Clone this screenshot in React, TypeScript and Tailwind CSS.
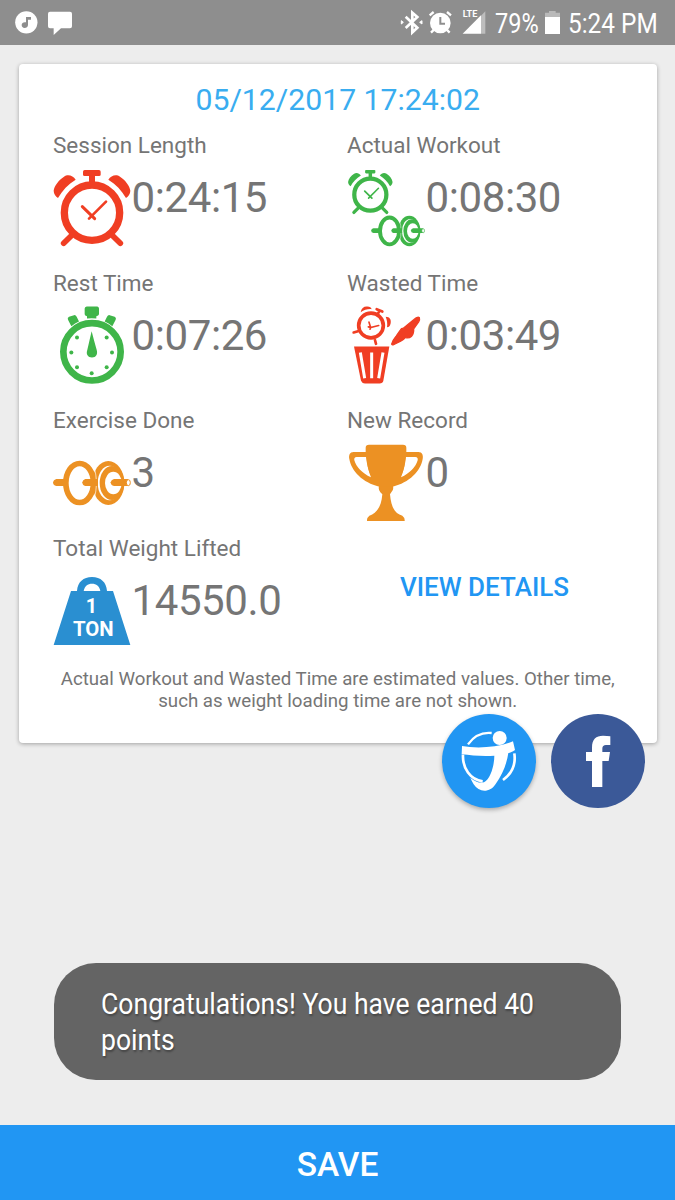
import type { ReactNode } from "react";

const RED = "#f03e23";
const GREEN = "#3fb549";
const ORANGE = "#ec9123";

function Icon({ viewBox, children }: { viewBox: string; children: ReactNode }) {
  return (
    <svg viewBox={viewBox} className="mt-[10.5px] h-[78px] w-[78px] shrink-0 overflow-visible" fill="none">
      {children}
    </svg>
  );
}

function AlarmShape({ color }: { color: string }) {
  return (
    <>
      <g fill={color}>
        <path d="M134 150H177Q182 150 182 155V164Q182 168 177 168H165V190H147V168H134Q129 168 129 164V155Q129 150 134 150Z" />
        <path d="M107 179C99 166 83 162 72 170C55 181 43 198 41 212C41 222 47 229 54 234C67 211 84 193 107 179Z" />
        <path d="M205 179C213 166 229 162 240 170C257 181 269 198 271 212C271 222 265 229 258 234C245 211 228 193 205 179Z" />
      </g>
      <circle cx="156" cy="278" r="83" stroke={color} strokeWidth="22" />
      <g stroke={color} strokeLinecap="round">
        <path d="M97 344L71 370M215 344L241 370" strokeWidth="17" />
        <path d="M198 245L147 296" strokeWidth="8" />
        <path d="M127 260L164 296" strokeWidth="9" />
      </g>
    </>
  );
}

function DumbbellShape({ color }: { color: string }) {
  return (
    <>
      <ellipse cx="119" cy="144" rx="41.5" ry="58.5" stroke={color} strokeWidth="17" />
      <ellipse cx="205" cy="144" rx="48" ry="66" fill={color} />
      <ellipse cx="209" cy="144" rx="36" ry="52" fill="#fff" />
      <ellipse cx="216" cy="144" rx="37" ry="51" fill={color} />
      <ellipse cx="220" cy="144" rx="25" ry="34" fill="#fff" />
      <path d="M163 98C171 126 171 162 163 190" stroke="#fff" strokeWidth="2" />
      <g fill={color}>
        <path d="M49 132H78V153H49Q39 151 39 142Q40 134 49 132Z" />
        <path d="M136 132H174V153H136Q127 151 127 142Q128 134 136 132Z" />
        <path d="M222 132H264V153H222Q212 151 212 142Q213 134 222 132Z" />
      </g>
      <ellipse cx="265" cy="143" rx="6" ry="9" fill="#fff" stroke={color} strokeWidth="3" />
    </>
  );
}

function SessionIcon() {
  return (
    <Icon viewBox="39 147 234 234">
      <AlarmShape color={RED} />
    </Icon>
  );
}

function WorkoutIcon() {
  return (
    <Icon viewBox="21 27 234 234">
      <g transform="translate(0.5 -57.3) scale(0.58)">
        <AlarmShape color={GREEN} />
      </g>
      <g transform="translate(66.5 113.5) scale(0.69)">
        <DumbbellShape color={GREEN} />
      </g>
    </Icon>
  );
}

function RestIcon() {
  return (
    <Icon viewBox="39 34.5 234 234">
      <g fill={GREEN}>
        <path d="M140 36H172Q177 37 177 42V59Q176 64 169 65V72Q155 71 141 72V65Q134 64 134 59V42Q134 37 140 36Z" />
        <path d="M84 76Q81 70 87 67L102 62Q107 61 110 67L117 81Q105 86 94 95Z" />
        <path d="M227 76Q230 70 224 67L209 62Q204 61 201 67L194 81Q206 86 217 95Z" />
        <path d="M155 110Q151 126 142 166C137 180 144 189 156 189C168 189 174 180 170 166Q160 130 155 110Z" />
        <circle cx="111" cy="129" r="6" />
        <circle cx="200" cy="129" r="6" />
        <circle cx="94" cy="174" r="6" />
        <circle cx="216" cy="174" r="6" />
        <circle cx="111" cy="218" r="6" />
        <circle cx="200" cy="218" r="6" />
        <circle cx="155" cy="236" r="6" />
      </g>
      <circle cx="156" cy="172" r="86" stroke={GREEN} strokeWidth="20" />
    </Icon>
  );
}

function WastedIcon() {
  return (
    <Icon viewBox="21 34.5 234 234">
      <circle cx="93" cy="93" r="37" stroke={RED} strokeWidth="11" />
      <g fill={RED}>
        <path d="M62 53C64 41 72 35 82 36C90 37 93 39 95 44C83 43 73 46 62 53Z" />
        <path d="M137 67C149 67 154 76 152 86C150 95 146 98 141 98C143 87 141 77 137 67Z" />
        <path d="M42 156H148L130 259Q128 267 119 267H75Q66 267 63 259Z" />
        <path
          d="M155 149C157 139 163 131 169 124L181 107Q184 101 190 101L221 76Q231 66 238 69Q240 75 236 82L221 103Q222 117 215 125Q206 133 196 129Q190 136 182 140L162 150Q156 153 155 149Z"
          stroke={RED}
          strokeWidth="4"
          strokeLinejoin="round"
        />
      </g>
      <g stroke={RED} strokeLinecap="round">
        <path d="M110 44L127 51M118 49L112 61" strokeWidth="8" />
        <path d="M41 114L54 110M105 137L108 148" strokeWidth="8" />
        <path d="M87 83L92 99L116 93M92 99L90 104M92 99L85 97" strokeWidth="5" />
      </g>
      <path d="M61 174L74 251M95 174V251M129 174L116 251" stroke="#fff" strokeWidth="9" />
    </Icon>
  );
}

function ExerciseIcon() {
  return (
    <Icon viewBox="39 27 234 234">
      <DumbbellShape color={ORANGE} />
    </Icon>
  );
}

function TrophyIcon() {
  return (
    <Icon viewBox="21 27 234 234">
      <path
        fill={ORANGE}
        d="M87 29H189Q199 29 199 38V50C196 95 190 125 158 151Q163 163 154 172L150 178C153 215 164 236 187 242Q195 248 194 258H81Q80 248 88 242C111 234 124 215 127 178L121 172Q113 162 118 151C87 125 80 95 77 50V38Q77 29 87 29Z"
      />
      <path
        fill={ORANGE}
        fillRule="evenodd"
        d="M80 51H41C29 51 26 61 28 72C34 108 68 143 118 155L158 155C208 143 242 108 248 72C250 61 247 51 235 51H196ZM79 66H50Q41 67 43 76C49 96 66 115 93 127C86 110 82 91 79 66ZM197 66H226Q235 67 233 76C227 96 210 115 183 127C190 110 194 91 197 66Z"
      />
    </Icon>
  );
}

function WeightIcon() {
  return (
    <Icon viewBox="39 21 234 234">
      <path fill="#2a8fd1" d="M41 240L93 78H111C113 51 130 36 156 36C182 36 199 51 201 78H219L271 240Z" />
      <path fill="#fff" d="M131 78C134 63 143 56 156 56C169 56 178 63 181 78Z" />
      <g fill="#fff" fontFamily="Roboto, sans-serif" fontWeight="700" textAnchor="middle">
        <text x="154" y="144" fontSize="59">1</text>
        <text x="160" y="214" fontSize="59" textLength="122" lengthAdjust="spacingAndGlyphs">TON</text>
      </g>
    </Icon>
  );
}

function Stat({ label, value, icon }: { label: string; value: string; icon: ReactNode }) {
  return (
    <div className="w-[294px]">
      <div className="text-[22.5px] leading-[26px] whitespace-nowrap">{label}</div>
      <div className="flex items-start">
        {icon}
        <div className="mt-[15px] ml-[0.5px] text-[42px] leading-[50px] tracking-[-0.4px] whitespace-nowrap">{value}</div>
      </div>
    </div>
  );
}

function StatusBar() {
  return (
    <header className="flex h-[45px] items-center bg-[#8e8e8e] text-[28px] leading-none text-white">
      <svg viewBox="0 0 240 135" className="h-[45px] w-20">
        <circle cx="79" cy="67" r="33.5" fill="#fff" />
        <path d="M80 51H93V59H84V75C84 81 79 84 74 84C68 84 65 80 65 75C65 69 71 65 78 67V51Z" fill="#8e8e8e" />
        <path d="M150 35H210Q216 35 216 41V79Q216 85 210 85H183L161 105V85H150Q144 85 144 79V41Q144 35 150 35Z" fill="#fff" />
      </svg>
      <svg viewBox="0 0 290 135" className="ml-auto h-[45px] w-[96.67px]" fill="none">
        <path d="M44 50L79 83L64 97V38L79 51L44 84" stroke="#fff" strokeWidth="8" />
        <path d="M31 62L37 67L31 72ZM93 62L86 67L93 72Z" fill="#fff" stroke="#fff" strokeWidth="3" />
        <circle cx="148" cy="69" r="31" fill="#fff" />
        <path d="M116 46L128 36M180 46L168 36M129 89L120 98M167 89L176 98" stroke="#fff" strokeWidth="7" />
        <path d="M148 51V71H162" stroke="#8e8e8e" strokeWidth="6" />
        <path d="M270 47L283 34V101H270Z" fill="#bdbdbd" />
        <path d="M215 101L270 46V101Z" fill="#fff" />
        <text x="215" y="52" fill="#fff" fontFamily="Roboto, sans-serif" fontWeight="700" fontSize="26" textLength="44" lengthAdjust="spacingAndGlyphs">LTE</text>
      </svg>
      <span className="ml-[7px] block w-[50px] origin-left scale-x-[.84] pt-0.5 whitespace-nowrap">79%</span>
      <svg viewBox="0 0 45 135" className="h-[45px] w-[15px]">
        <path d="M12 33H32V38H45V54H0V38H12Z" fill="#b9b9b9" />
        <path d="M0 51H45V102H0Z" fill="#fff" />
      </svg>
      <span className="ml-2 block w-[107.3px] origin-left scale-x-[.87] pt-0.5 whitespace-nowrap">5:24 PM</span>
    </header>
  );
}

function ShareButtons() {
  return (
    <div className="absolute top-[714px] right-[30px] flex gap-[15px]">
      <button aria-label="Share" className="h-[94px] w-[94px] rounded-full bg-[#2196f3] shadow-[0_2px_4px_rgba(0,0,0,0.28)]">
        <svg viewBox="38 42 282 282" className="h-full w-full" fill="none">
          <path d="M116 133C133 109 158 96 187 99" stroke="#fff" strokeWidth="7" />
          <path d="M101 164C99 205 123 239 160 244" stroke="#fff" strokeWidth="8" />
          <path d="M255 160C260 194 246 222 221 240" stroke="#fff" strokeWidth="8" />
          <circle cx="211" cy="114" r="21" fill="#fff" />
          <path
            d="M98 138C142 146 205 143 251 124L257 150C249 156 243 158 237 159C233 188 220 224 199 252C182 279 149 279 133 253Q127 243 123 233C138 245 151 250 164 247C184 237 195 195 195 167C160 170 127 166 97 163Z"
            fill="#fff"
          />
        </svg>
      </button>
      <button aria-label="Share on Facebook" className="h-[94px] w-[94px] rounded-full bg-[#3b5998]">
        <svg viewBox="363 42 282 282" className="h-full w-full">
          <path d="M486 261V183H468V156H486V143C486 117 498 107 519 107Q532 107 541 109V135H528Q517 135 517 146V156H540L536 183H517V261Z" fill="#fff" />
        </svg>
      </button>
    </div>
  );
}

export default function App() {
  return (
    <div className="relative flex h-[1200px] w-[675px] flex-col bg-[#ededed] font-['Roboto',sans-serif] text-[#757575]">
      <StatusBar />
      <main className="mx-[19px] mt-[19px] h-[679px] w-[637.5px] rounded-[4px] bg-white pt-[18px] shadow-[0_1px_4px_rgba(0,0,0,0.32)]">
        <h1 className="text-center text-[30.2px] leading-9 text-[#39adf0]">05/12/2017 17:24:02</h1>
        <div className="mt-3.5 ml-[34px] grid grid-cols-[294px_294px]">
          <div className="h-[137.5px]"><Stat label="Session Length" value="0:24:15" icon={<SessionIcon />} /></div>
          <div><Stat label="Actual Workout" value="0:08:30" icon={<WorkoutIcon />} /></div>
          <div className="h-[137.5px]"><Stat label="Rest Time" value="0:07:26" icon={<RestIcon />} /></div>
          <div><Stat label="Wasted Time" value="0:03:49" icon={<WastedIcon />} /></div>
          <div className="h-32"><Stat label="Exercise Done" value="3" icon={<ExerciseIcon />} /></div>
          <div><Stat label="New Record" value="0" icon={<TrophyIcon />} /></div>
          <div className="h-[133px]"><Stat label="Total Weight Lifted" value="14550.0" icon={<WeightIcon />} /></div>
          <button className="mt-[37px] h-[30px] w-[275px] text-center text-[26px] leading-[30px] font-medium text-[#2196f3]">VIEW DETAILS</button>
        </div>
        <p className="text-center text-[18.7px] leading-[22px]">
          Actual Workout and Wasted Time are estimated values. Other time,
          <br />
          such as weight loading time are not shown.
        </p>
      </main>
      <ShareButtons />
      <div role="status" className="mt-auto mb-[45px] ml-[53.5px] h-[117.5px] w-[567px] rounded-[42px] bg-[#646464] pt-[23.5px] pl-[47px] text-[30px] leading-[36px] text-white">
        <p className="origin-left scale-x-[.886] whitespace-nowrap [text-shadow:1px_2px_2px_rgba(0,0,0,0.3)]">
          Congratulations! You have earned 40
          <br />
          points
        </p>
      </div>
      <button className="h-[75px] shrink-0 bg-[#2196f3] pt-1 text-[33.5px] leading-none font-medium text-white">SAVE</button>
    </div>
  );
}
